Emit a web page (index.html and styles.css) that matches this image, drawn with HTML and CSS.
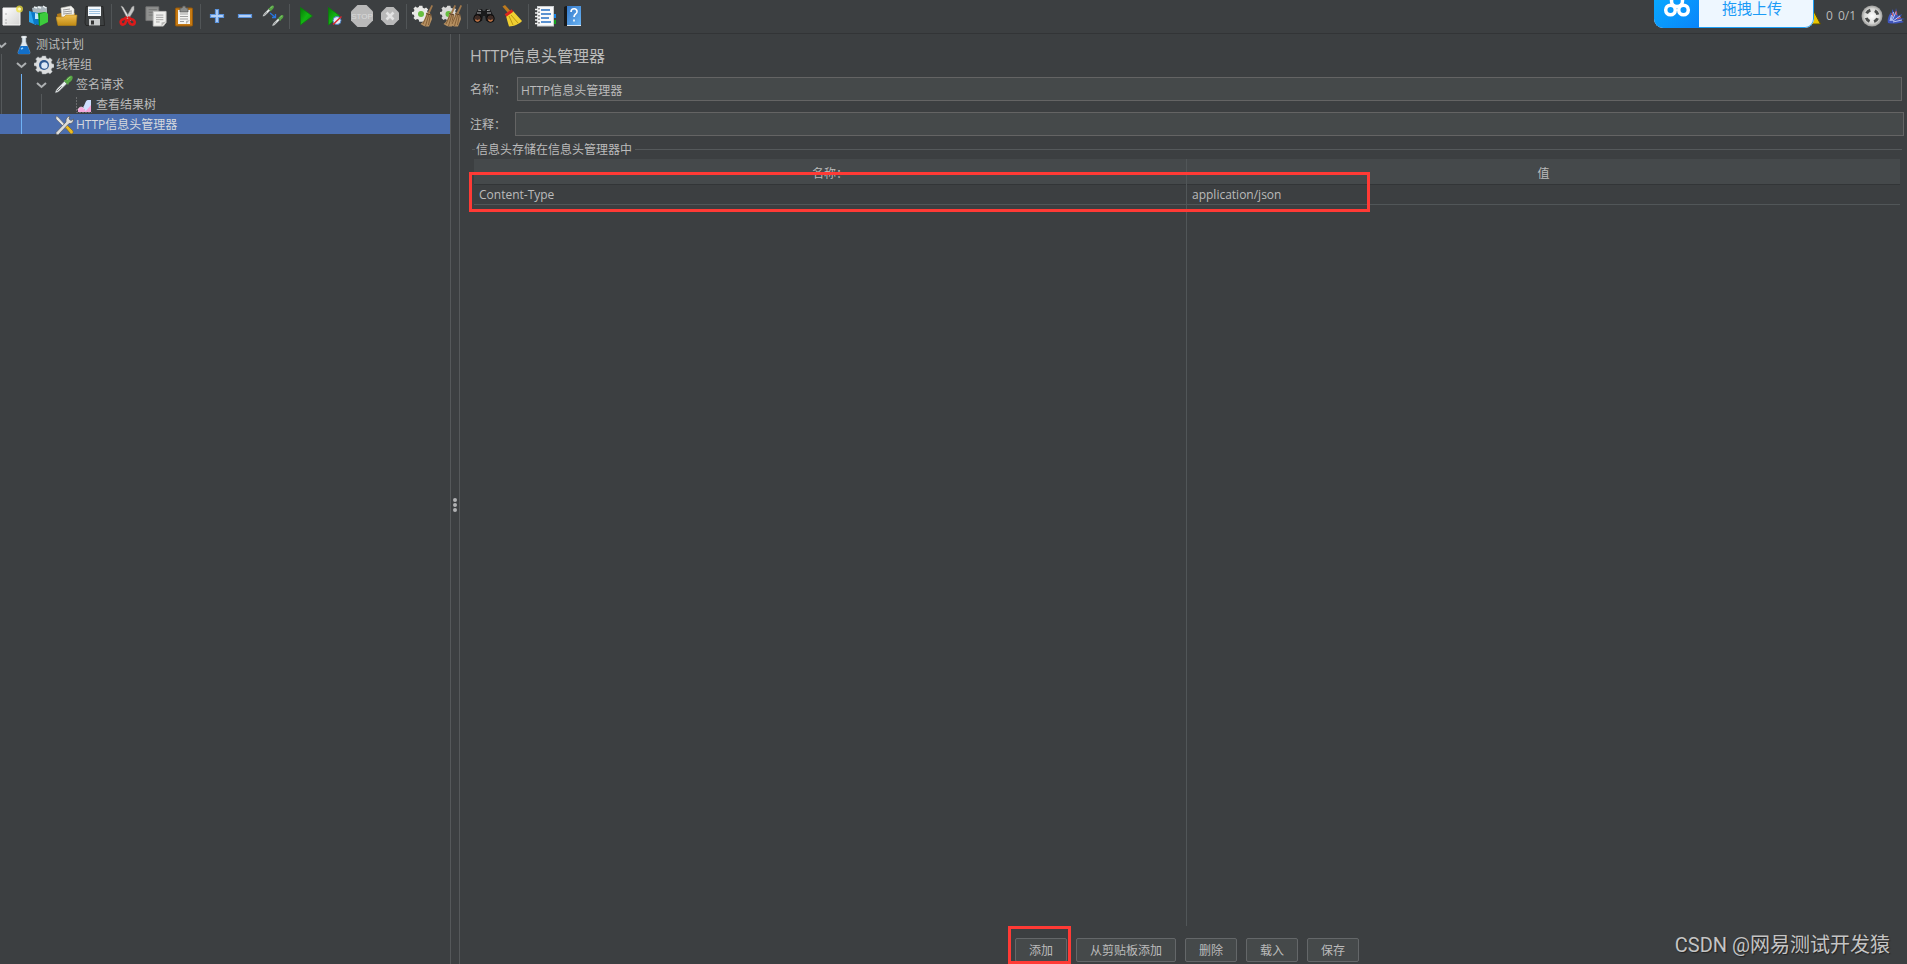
FILE: index.html
```html
<!DOCTYPE html>
<html lang="zh-CN">
<head>
<meta charset="utf-8">
<title>HTTP信息头管理器</title>
<link rel="stylesheet" href="styles.css">
</head>
<body>
<svg class="defs" aria-hidden="true">
  <defs>
    <linearGradient id="gold" x1="0" y1="0" x2="0" y2="1"><stop offset="0" stop-color="#f0c050"/><stop offset="1" stop-color="#c08a14"/></linearGradient>
    <linearGradient id="paper" x1="0" y1="0" x2="1" y2="1"><stop offset="0" stop-color="#ffffff"/><stop offset="1" stop-color="#d4d4d2"/></linearGradient>
    <linearGradient id="go" x1="0" y1="0" x2="1" y2="1"><stop offset="0" stop-color="#067a06"/><stop offset=".5" stop-color="#13b513"/><stop offset="1" stop-color="#0a8c0a"/></linearGradient>
    <linearGradient id="book" x1="0" y1="0" x2="1" y2="1"><stop offset="0" stop-color="#3478c8"/><stop offset="1" stop-color="#6ab4f4"/></linearGradient>
    <radialGradient id="ball"><stop offset="0" stop-color="#ffffff"/><stop offset=".7" stop-color="#d8d8d6"/><stop offset="1" stop-color="#9a9a98"/></radialGradient>
    <g id="gear">
      <path d="M9 1h4l.5 2.400 2.100.9 2-1.300 2.600 2.600-1.300 2 .9 2.100 2.200.4v3.600l-2.200.5-.9 2.100 1.300 2-2.600 2.600-2-1.300-2.100.9L13 21H9l-.5-2.500-2.100-.9-2 1.300-2.600-2.600 1.300-2-.9-2.100L0 11.700V8.900l2.200-.5.9-2.100-1.300-2L4.400 2l2 1.300 2.100-.9z"/>
    </g>
    <g id="besom">
      <path d="M19.500 0l1.500.8-3.500 8-2-.8z" fill="#a0784c"/>
      <path d="M14.500 7.500l4.500 1.500 1 5-3 7.500c-3 .4-6-.5-8.500-2.500 3-2 5-6 6-11.500z" fill="#b58f60"/>
      <path d="M15.500 9l-4.500 10M17 9l-3.500 12M18.300 10l-1.800 10" stroke="#76532f" fill="none" stroke-width=".8"/>
      <path d="M14.300 8.500l5 1.500" stroke="#5c4028" stroke-width="1"/>
    </g>
    <g id="pipette">
      <path d="M1.500 19.500c.4-2.500 2-4.500 4-6.500l6-6 2.500 2.500-6.500 6.500c-2 2-3.600 3.300-6 3.500z" fill="#e9eeee" stroke="#8b8f90" stroke-width=".7"/>
      <path d="M3.500 17.500l5-5" stroke="#555" stroke-width="1"/>
      <path d="M10.500 6l5 5 1-2.500c2-1 4.500-3.500 4-6.500-.2-1.200-1.800-1.500-3-1-1.800.7-3.500 2.500-4.500 4.300z" fill="#57a545"/>
      <path d="M14.500 5.500c1-1.600 2-2.500 3.500-3" stroke="#a5dc8c" fill="none"/>
    </g>
  </defs>
</svg>

<header class="toolbar">
  <nav class="tools" aria-label="工具栏">
    <button class="tool tool-first" aria-label="新建"><svg viewBox="0 0 22 22"><path d="M2 3h17v17H2z" fill="url(#paper)" stroke="#f6f6f6"/><path d="M4.500 15h1M4.500 18h1M4.500 9h1" stroke="#777"/><circle cx="18.500" cy="4" r="3.500" fill="#f2e23c" opacity=".75"/><circle cx="18.500" cy="4" r="1.500" fill="#fffbc0"/></svg></button>
    <button class="tool" aria-label="模板"><svg viewBox="0 0 22 22"><path d="M4 3l7-2 8 1v9l-13 2z" fill="#a9b4ba"/><path d="M6 2l3 1M10 2l3 1M15 1l3 2" stroke="#eef3f5" stroke-width="1.500"/><path d="M1 6l7 2v12l-7-3z" fill="#2ba5ee"/><path d="M3 7l8 1v12l-5-1z" fill="#0b77c6"/><path d="M7 8l4 1v5H7z" fill="#bfe6fb"/><path d="M10 8l7-1 3 3v7l-9 4z" fill="#109a1d"/><path d="M12 9l6-2 2 2v8l-8 4z" fill="#3dcc3d"/></svg></button>
    <button class="tool" aria-label="打开"><svg viewBox="0 0 22 22"><path d="M1 9l4-1h14v11H2z" fill="#b17a1a"/><path d="M5 3l10-2 3 3v10H6z" fill="#f3f3f0" stroke="#c7c7c0" stroke-width=".6"/><path d="M7 5l7-1M7 7l9-1M7 9l9-1" stroke="#9b9b9b"/><path d="M0 12h8l2-2h11l-1 10.500H2z" fill="url(#gold)" stroke="#b98718" stroke-width=".6"/></svg></button>
    <button class="tool" aria-label="保存"><svg viewBox="0 0 22 22"><path d="M2 1.500h17l1.500 19H2L1 18z" fill="#3d4041" stroke="#222" stroke-width=".8"/><path d="M4 1.500h13V11H4z" fill="#f4f8fc"/><path d="M5 4.500h11M5 6.500h11M5 8.500h11" stroke="#9fc3e0"/><path d="M5 14h11v6.500H5z" fill="#c9cccd"/><path d="M7 15.500h3v4H7z" fill="#333"/></svg></button>
    <span class="sep"></span>
    <button class="tool" aria-label="剪切"><svg viewBox="0 0 22 22"><path d="M4 1l2 1 8 13-2 1.500z" fill="#e2e2e0" stroke="#999" stroke-width=".5"/><path d="M17 1l-2 1-7 13 2 1.500L17 5z" fill="#c6c7c6" stroke="#999" stroke-width=".5"/><g fill="none" stroke="#dc1a1a" stroke-width="2.600"><path d="M10 12l-3 2c-3 .5-4 2.500-3 4.500 1 1.800 4 1.300 4.500-.7l1.300-4M11 12l3 2c3 .5 4.500 2.500 3.500 4.500-1 1.800-4.200 1.300-5-.7l-1.300-4"/></g></svg></button>
    <button class="tool" aria-label="复制"><svg viewBox="0 0 24 22"><path d="M1 1h14v15H1z" fill="#8f908f" stroke="#777"/><path d="M4 4h9M4 7h6M4 10h6" stroke="#747574"/><path d="M9 6h14v12l-3 4H9z" fill="#efefed" stroke="#c4c4c2"/><path d="M12 10h8M12 12.500h8M12 15h8M12 17.500h4" stroke="#a0a09f"/><path d="M23 17l-5 1v4z" fill="#b7b7b5"/></svg></button>
    <button class="tool" aria-label="粘贴"><svg viewBox="0 0 22 22"><rect x="2.500" y="3" width="17" height="18" rx="1" fill="#c77a12" stroke="#96590a"/><path d="M5 5h12v14H5z" fill="#f4f4f2"/><path d="M7 9h8M7 11.500h8M7 14h8M7 16.500h4" stroke="#a0a09f"/><path d="M17 15l-4 1v3z" fill="#b7b7b5"/><path d="M7 3h2l1-2h2l1 2h2v4H7z" fill="#8a8c8b" stroke="#555" stroke-width=".7"/></svg></button>
    <span class="sep"></span>
    <button class="tool" aria-label="全部展开"><svg viewBox="0 0 22 22"><path d="M9.500 4.500h3v5h5v3h-5v5h-3v-5h-5v-3h5z" fill="#b4d0f5" stroke="#5b93dc" stroke-width="1.200"/></svg></button>
    <button class="tool" aria-label="全部折叠"><svg viewBox="0 0 22 22"><path d="M4.500 9.500h13v3h-13z" fill="#b4d0f5" stroke="#5b93dc" stroke-width="1.200"/></svg></button>
    <button class="tool" aria-label="切换"><svg viewBox="0 0 22 22"><use href="#pipette" transform="translate(0 0) scale(.58)"/><use href="#pipette" transform="translate(9.500 9.500) scale(.58)"/><path d="M8 8l5 4M13.500 9v3.500H10" stroke="#2976dd" stroke-width="1.300" fill="none"/></svg></button>
    <span class="sep"></span>
    <button class="tool" aria-label="启动"><svg viewBox="0 0 22 22"><path d="M5.500 2.500v17.500L17.500 11z" fill="url(#go)" stroke="#0b7e0b" stroke-width=".7"/></svg></button>
    <button class="tool" aria-label="不停顿开始"><svg viewBox="0 0 22 22"><path d="M5.500 2.500v17.500L17 11z" fill="url(#go)" stroke="#0b7e0b" stroke-width=".7"/><circle cx="14" cy="15.500" r="4" fill="#e3ebf5" stroke="#4a7fc2"/><path d="M10 19.500l8.500-8" stroke="#d8262b" stroke-width="1.500"/></svg></button>
    <button class="tool" aria-label="停止"><svg viewBox="0 0 22 22"><path d="M6.500 0h9L22 6.500v9L15.500 22h-9L0 15.500v-9z" fill="#b9b9b9"/><text class="stop-word" x="11" y="14">STOP</text></svg></button>
    <button class="tool" aria-label="关闭"><svg viewBox="0 0 22 22"><path d="M7.500 2h7L20 7.500v7L14.500 20h-7L2 14.500v-7z" fill="#b9b9b9"/><path d="M7.500 7.500l7 7m0-7l-7 7" stroke="#e4e4e4" stroke-width="2.600"/></svg></button>
    <span class="sep"></span>
    <button class="tool" aria-label="清除"><svg viewBox="0 0 22 22"><use href="#gear" transform="translate(0 0) scale(.8)" fill="#e8e8e6"/><circle cx="9" cy="9" r="3" fill="#67be3f"/><use href="#besom"/></svg></button>
    <button class="tool" aria-label="清除全部"><svg viewBox="0 0 22 22"><use href="#gear" transform="translate(0 0) scale(.8)" fill="#d8d8d6"/><circle cx="8.500" cy="9" r="3" fill="#67be3f"/><use href="#besom" transform="translate(-5)"/><use href="#besom" transform="translate(1)"/></svg></button>
    <span class="sep"></span>
    <button class="tool" aria-label="查找"><svg viewBox="0 0 22 22"><path d="M5 4h4l1 2h2l1-2h4l4 8v4h-8l-1-5h-2l-1 5H1v-4z" fill="#1a1b1c"/><path d="M5 5l3 .5M17 5l-3 .5M4 8h4M14 8h4" stroke="#a5a6a7" stroke-width="1.200"/><circle cx="4.500" cy="13.500" r="3.800" fill="#3e2c26" stroke="#0b0b0b"/><circle cx="17.500" cy="13.500" r="3.800" fill="#3e2c26" stroke="#0b0b0b"/><path d="M2.500 14.500c1 2 3 2 4 0M15.500 14.500c1 2 3 2 4 0" stroke="#c57746" fill="none" stroke-width="1.500"/></svg></button>
    <button class="tool" aria-label="重置查找"><svg viewBox="0 0 22 22"><path d="M1.500 1.500L4 0l5.500 6L7 8z" fill="#bd7a1e"/><path d="M5 11l7-5 9 10c-2 2.500-8 5.500-13 5.500C7 18 6 15 5 11z" fill="#f0cf31"/><path d="M8 11l4 9M10 10l7 8" stroke="#bb9512"/><path d="M4.500 10.500l7-5" stroke="#d9251d" stroke-width="2.800"/></svg></button>
    <span class="sep"></span>
    <button class="tool" aria-label="函数助手"><svg viewBox="0 0 22 22"><path d="M18 9h4v4h-4z" fill="#1986e8"/><path d="M18 15h4v4h-4z" fill="#15a31e"/><rect x="3.500" y="1.500" width="16" height="19.500" fill="#f8f9fa" stroke="#c9ccce"/><path d="M7 5h9M7 9h10M7 13h8M7 17h10" stroke="#246fc2" stroke-width="1.500"/><path d="M1 4.500h4M1 8h4M1 11.500h4M1 15h4M1 18.500h4" stroke="#f0f0f0" stroke-width="1.500"/><path d="M5 3v17" stroke="#303030" stroke-dasharray="1.500 2"/></svg></button>
    <button class="tool" aria-label="帮助"><svg viewBox="0 0 22 22"><path d="M2 2l2-1h3v20H2z" fill="#17191b"/><path d="M5 1h14v19.500H5z" fill="url(#book)"/><path d="M5 20.500h14" stroke="#dfe8f0"/><path d="M9 7c.2-4.500 6.500-4 6 0-.3 2-3 2.200-3 5M12 14.500v2" stroke="#fff" stroke-width="1.600" fill="none"/></svg></button>
  </nav>
  <div class="status">
    <svg class="warn" viewBox="0 0 18 18"><path d="M9 1l8.500 16H.5z" fill="#e9c500" stroke="#5b4c00"/><path d="M9 6v5M9 13v2" stroke="#222" stroke-width="2"/></svg>
    <span class="errors">0</span>
    <span class="threads">0/1</span>
    <svg class="idle" viewBox="0 0 22 22"><circle cx="11" cy="11" r="10.500" fill="url(#ball)"/><circle cx="11" cy="11" r="6" fill="none" stroke="#4b4d4c" stroke-width="3" stroke-dasharray="4.700 4.720" stroke-dashoffset="-2.300"/></svg>
    <svg class="feather" viewBox="0 0 18 18"><path d="M1 16C0 12 2 8 4 5l1 3 0-6 3 5 1-6 2 8 4-2-2 4 5 1-5 1 4 2c-5 1.500-11 2-16 1z" fill="#3f55bd"/><path d="M3 14l1.500-6M4 14l2.500-9M5 14l4-9M6 14l7-5M6 15l9-2" stroke="#c9d3fa" stroke-width=".9"/><path d="M5 6l1 3M9 4l.5 4M10 12l4-1.500" stroke="#da5a55"/></svg>
  </div>
  <button class="upload">
    <span class="upload-logo"><svg viewBox="0 0 28 26"><g fill="none" stroke="#fff" stroke-width="3.500"><circle cx="14" cy="9" r="5.500"/><circle cx="7.500" cy="18" r="4.800"/><circle cx="20.500" cy="18" r="4.800"/></g></svg></span>
    <span class="upload-text">拖拽上传</span>
  </button>
</header>

<div class="workspace">
  <aside class="tree">
    <ul>
      <li>
        <div class="node level1"><button class="toggle" aria-label="折叠"><svg viewBox="0 0 14 12"><path d="M-3 4l4.500 4L6 4"/></svg></button><svg class="kind" viewBox="0 0 20 20"><path d="M8 1h4v6l4 10c.4 1.500-.3 2-1.500 2h-9C4.300 19 3.600 18.500 4 17L8 7z" fill="#dfe8ef" stroke="#77828b" stroke-width=".6"/><path d="M6.500 11h7l2.500 6c.4 1.500-.3 2-1.500 2h-9c-1.200 0-1.900-.5-1.500-2z" fill="#126fc9"/><path d="M7 2h6" stroke="#fff"/><path d="M7 14l2-1" stroke="#8fd0ff" stroke-width="1.500"/></svg><span>测试计划</span></div>
        <ul class="branch branch1">
          <li>
            <div class="node level2"><button class="toggle" aria-label="折叠"><svg viewBox="0 0 14 12"><path d="M-3 4l4.500 4L6 4"/></svg></button><svg class="kind" viewBox="0 0 22 22"><use href="#gear" fill="#dcdedf" stroke="#8e9499" stroke-width=".5"/><circle cx="11" cy="11" r="5.500" fill="#2e588f"/><circle cx="11.500" cy="11.500" r="3.500" fill="#dbe8f7"/></svg><span>线程组</span></div>
            <ul class="branch branch2">
              <li>
                <div class="node level3"><button class="toggle" aria-label="折叠"><svg viewBox="0 0 14 12"><path d="M-3 4l4.500 4L6 4"/></svg></button><svg class="kind" viewBox="0 0 22 22"><use href="#pipette"/></svg><span>签名请求</span></div>
                <ul class="branch branch3">
                  <li><div class="node level4"><svg class="kind" viewBox="0 0 20 20"><path d="M2.500 2v15.500H18" stroke="#686a6b" fill="none" stroke-dasharray="2 1"/><path d="M4 17v-2c1-3 4-4 6-1l6 3z" fill="#f7a8dc"/><path d="M4 15c1-3 4-4 6-1" fill="none" stroke="#ffd6f0"/><path d="M9 12c2-1 2-7 5-7h3v12h-5z" fill="#cfe0ff"/><path d="M17 10v7h-6z" fill="#f5a4d6"/></svg><span>查看结果树</span></div></li>
                </ul>
              </li>
              <li><div class="node level3 selected"><svg class="kind" viewBox="0 0 20 20"><path d="M2 1l2 1 9 10-1.500 1.500L2 4z" fill="#e4e4e2" stroke="#666" stroke-width=".6"/><path d="M11 12l2-2 6 6c.8 2-1 3.500-2.500 2.500z" fill="#edbb21" stroke="#8a6708" stroke-width=".6"/><path d="M2 17.500L12 7c-.5-3 1-5.500 4-6l-1 3 2 1.500 2.500-1.500c.3 3-2 5-4.500 4.500L4.500 19.500c-1.500.8-3-.7-2.500-2z" fill="#dcdcda" stroke="#55585a" stroke-width=".7"/></svg><span>HTTP信息头管理器</span></div></li>
            </ul>
          </li>
        </ul>
      </li>
    </ul>
  </aside>
  <div class="splitter"><i></i><i></i><i></i></div>
  <main class="editor">
    <h1>HTTP信息头管理器</h1>
    <div class="field name-field"><label for="name">名称：</label><input id="name" type="text" value="HTTP信息头管理器"></div>
    <div class="field comment-field"><label for="comment">注释：</label><input id="comment" type="text"></div>
    <section class="headers">
      <h2>信息头存储在信息头管理器中</h2>
      <div class="grid">
        <table>
          <thead><tr><th>名称：</th><th>值</th></tr></thead>
          <tbody><tr><td>Content-Type</td><td>application/json</td></tr></tbody>
        </table>
        <span class="mark mark-row"></span>
      </div>
      <div class="actions">
        <span class="marked"><button>添加</button><span class="mark mark-button"></span></span>
        <button>从剪贴板添加</button>
        <button>删除</button>
        <button>载入</button>
        <button>保存</button>
      </div>
    </section>
  </main>
</div>
<p class="credit">CSDN @网易测试开发猿</p>
</body>
</html>
```

FILE: styles.css
```css
* { box-sizing: border-box; }

body {
  margin: 0;
  height: 100vh;
  display: flex;
  flex-direction: column;
  overflow: hidden;
  background: #3c3f41;
  color: #bbbbbb;
  font: 12px/20px "Open Sans", "Noto Sans CJK SC", sans-serif;
}

button, input { font: inherit; color: inherit; }
ul { margin: 0; padding: 0; list-style: none; }
.defs { position: absolute; width: 0; height: 0; }

.toolbar {
  position: relative;
  display: flex;
  justify-content: space-between;
  flex: none;
  height: 34px;
  padding-bottom: 1px;
  border-bottom: 1px solid #323436;
}
.tools { display: flex; align-items: center; }
.tool {
  width: 28px;
  height: 26px;
  padding: 0;
  border: 0;
  background: none;
  display: flex;
  align-items: center;
  justify-content: center;
}
.tool-first { width: 23px; margin-right: 2px; }
.tool svg { width: 22px; height: 22px; }
.stop-word {
  font: 8px "Liberation Sans", sans-serif;
  fill: #dadada;
  text-anchor: middle;
}
.sep {
  width: 1px;
  height: 25px;
  margin: 0 2px;
  background: #515557;
}

.status { display: flex; align-items: center; padding-right: 2px; }
.warn { width: 18px; height: 18px; margin-right: 5px; }
.errors { margin-right: 5px; }
.threads { margin-right: 5px; }
.idle { width: 22px; height: 22px; margin-right: 4px; }
.feather { width: 18px; height: 18px; }

.upload {
  position: absolute;
  top: 0;
  right: 93px;
  width: 160px;
  height: 28px;
  padding: 0;
  display: flex;
  overflow: hidden;
  border: 0;
  border-radius: 0 0 9px 9px;
  background: #eef7ff;
  color: #1c9bf6;
}
.upload-logo {
  width: 45px;
  height: 28px;
  background: linear-gradient(135deg, #08a8ff, #0a84fa);
}
.upload-logo svg { display: block; width: 28px; height: 26px; margin: -8px auto 0; }
.upload-text {
  flex: 1;
  height: 28px;
  padding-right: 8px;
  border: solid #1d9ff5;
  border-width: 0 1px 1px 0;
  border-radius: 0 0 9px 0;
  font-size: 15px;
  line-height: 16px;
}

.workspace { flex: 1; display: flex; min-height: 0; }
.tree { width: 450px; flex: none; }
.node {
  display: flex;
  align-items: center;
  height: 20px;
  padding-top: 2px;
  white-space: nowrap;
}
.level2 { padding-left: 20px; }
.level3 { padding-left: 40px; }
.level4 { padding-left: 60px; }
.selected { background: #4b6eaf; color: #d6d9de; }
.toggle {
  width: 14px;
  height: 12px;
  padding: 0;
  border: 0;
  background: none;
}
.toggle svg {
  display: block;
  width: 14px;
  height: 12px;
  overflow: visible;
  fill: none;
  stroke: #adb0b2;
  stroke-width: 2;
}
.kind { width: 20px; height: 20px; margin-right: 2px; }
.kind:first-child { margin-left: 14px; }
.branch { position: relative; }
.branch::before {
  content: "";
  position: absolute;
  top: 0;
  bottom: 0;
  width: 1px;
  background: #55595b;
}
.branch1::before { left: 1px; }
.branch2::before { left: 21px; background: #6fb2f5; }
.branch3::before { left: 41px; }

.splitter {
  flex: none;
  width: 10px;
  padding-top: 12px;
  border: solid #55585a;
  border-width: 0 1px;
  display: flex;
  flex-direction: column;
  align-items: center;
  justify-content: center;
  gap: 1px;
}
.splitter i { width: 4px; height: 4px; border-radius: 2px; background: #b0b2b3; }

.editor {
  flex: 1;
  min-width: 0;
  display: flex;
  flex-direction: column;
  padding: 10px 3px 0 10px;
}
h1 { margin: 0; font-size: 16px; font-weight: 400; line-height: 24px; }
.field { display: flex; align-items: center; }
.field label { width: 45px; flex: none; padding-top: 2px; }
.field input {
  flex: 1;
  min-width: 0;
  height: 24px;
  padding: 1px 3px 0;
  border: 1px solid #646464;
  border-radius: 0;
  outline: 0;
  background: #45494a;
}
.name-field { margin: 9px 2px 0 0; }
.name-field label { width: 47px; }
.comment-field { margin-top: 11px; }

.headers {
  flex: 1;
  display: flex;
  flex-direction: column;
  min-height: 0;
  padding-top: 4px;
}
h2 {
  display: flex;
  align-items: center;
  gap: 1px;
  margin: 0 2px;
  font-size: 12px;
  font-weight: 400;
  line-height: 19px;
}
h2::before, h2::after { content: ""; height: 1px; background: #55595b; }
h2::before { width: 3px; }
h2::after { flex: 1; margin-left: 2px; }
.grid { position: relative; flex: 1; margin: 0 4px; }
.grid::before {
  content: "";
  position: absolute;
  top: 0;
  bottom: 0;
  left: 50%;
  width: 1px;
  margin-left: -1px;
  background: #515658;
}
table { width: 100%; border-collapse: separate; border-spacing: 0; table-layout: fixed; }
th {
  height: 26px;
  padding: 4px 0 0;
  background: #45494b;
  border-bottom: 1px solid #323537;
  font-weight: 400;
}
th:first-child { border-right: 1px solid #35383a; }
td { height: 20px; padding: 0 5px; border-bottom: 1px solid #515658; line-height: 19px; }

.actions {
  display: flex;
  justify-content: center;
  gap: 9px;
  padding: 12px 0 2px;
}
.actions button {
  height: 24px;
  padding: 2px 13px 0;
  border: 1px solid #646769;
  border-radius: 2px;
  background: #45494a;
  line-height: 20px;
}
.marked { position: relative; display: flex; }

.mark { position: absolute; border: 3px solid #ff3a35; pointer-events: none; }
.mark-row { top: 13px; left: -5px; width: 63.2%; height: 40px; }
.mark-button { top: -12px; right: -4px; bottom: -2px; left: -7px; }

.credit {
  position: absolute;
  right: 17px;
  bottom: 7px;
  margin: 0;
  color: #c4c4c4;
  font: 20px/24px Roboto, "Noto Sans CJK SC", sans-serif;
  text-shadow: 1px 1px 1px #222;
}
```
